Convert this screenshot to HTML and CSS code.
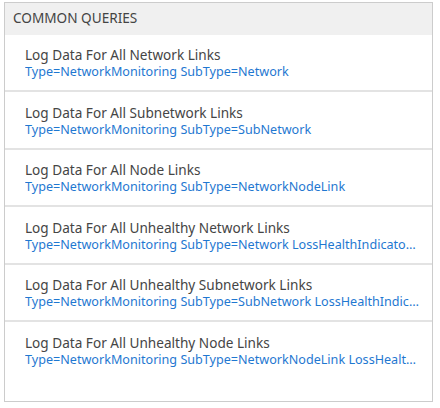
FILE: index.html
```html
<!DOCTYPE html>
<html>
<head>
<meta charset="utf-8">
<link rel="stylesheet" href="styles.css">
</head>
<body>
<div class="panel">
  <div class="header">COMMON QUERIES</div>
  <ul class="list">
    <li class="item">
      <div class="title">Log Data For All Network Links</div>
      <div class="query">Type=NetworkMonitoring SubType=Network</div>
    </li>
    <li class="item">
      <div class="title">Log Data For All Subnetwork Links</div>
      <div class="query">Type=NetworkMonitoring SubType=SubNetwork</div>
    </li>
    <li class="item">
      <div class="title">Log Data For All Node Links</div>
      <div class="query">Type=NetworkMonitoring SubType=NetworkNodeLink</div>
    </li>
    <li class="item">
      <div class="title">Log Data For All Unhealthy Network Links</div>
      <div class="query">Type=NetworkMonitoring SubType=Network LossHealthIndicator=Unhealthy</div>
    </li>
    <li class="item">
      <div class="title">Log Data For All Unhealthy Subnetwork Links</div>
      <div class="query">Type=NetworkMonitoring SubType=SubNetwork LossHealthIndicator=Unhealthy</div>
    </li>
    <li class="item last">
      <div class="title">Log Data For All Unhealthy Node Links</div>
      <div class="query">Type=NetworkMonitoring SubType=NetworkNodeLink LossHealthIndicator=Unhealthy</div>
    </li>
  </ul>
</div>
</body>
</html>
```
FILE: styles.css
```css
html, body {
  margin: 0;
  padding: 0;
  background: #ffffff;
}
body {
  padding: 2px 4px 0 4px;
  font-family: "Noto Sans", "Open Sans", sans-serif;
}
.panel {
  width: 429px;
  height: 400px;
  border: 1px solid #cccccc;
  box-sizing: border-box;
  background: #ffffff;
  display: flex;
  flex-direction: column;
}
.header {
  background: #f0f0f0;
  height: 32px;
  box-sizing: border-box;
  padding: 6px 0 0 8px;
  font-size: 13.6px;
  color: #444444;
  line-height: 18px;
}
.list {
  list-style: none;
  margin: 0;
  padding: 0;
}
.item {
  height: 57px;
  box-sizing: border-box;
  border-bottom: 2px solid #e3e3e3;
  padding: 11px 13px 0 20px;
}
.item:nth-child(even) {
  height: 58px;
  padding-top: 12px;
}
.item.last {
  border-bottom: none;
}
.title {
  font-size: 13.6px;
  line-height: 18px;
  color: #454545;
  white-space: nowrap;
  overflow: hidden;
  text-overflow: ellipsis;
}
.query {
  font-size: 12.6px;
  line-height: 16px;
  color: #1f78d1;
  white-space: nowrap;
  overflow: hidden;
  text-overflow: ellipsis;
}
```
